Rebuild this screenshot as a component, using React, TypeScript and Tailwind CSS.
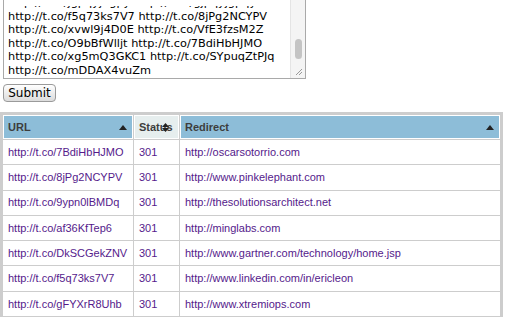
const lines = [
  "http://t.co/f5q73ks7V7 http://t.co/8jPg2NCYPV",
  "http://t.co/xvwl9j4D0E http://t.co/VfE3fzsM2Z",
  "http://t.co/O9bBfWlljt http://t.co/7BdiHbHJMO",
  "http://t.co/xg5mQ3GKC1 http://t.co/SYpuqZtPJq",
  "http://t.co/mDDAX4vuZm",
];

const rows = [
  ["http://t.co/7BdiHbHJMO", "http://oscarsotorrio.com"],
  ["http://t.co/8jPg2NCYPV", "http://www.pinkelephant.com"],
  ["http://t.co/9ypn0lBMDq", "http://thesolutionsarchitect.net"],
  ["http://t.co/af36KfTep6", "http://minglabs.com"],
  ["http://t.co/DkSCGekZNV", "http://www.gartner.com/technology/home.jsp"],
  ["http://t.co/f5q73ks7V7", "http://www.linkedin.com/in/ericleon"],
  ["http://t.co/gFYXrR8Uhb", "http://www.xtremiops.com"],
  ["", ""],
];

function UpArrow() {
  return (
    <svg width="8" height="5" viewBox="0 0 8 5" className="shrink-0">
      <path d="M0 5 L4 0 L8 5 Z" fill="#222" />
    </svg>
  );
}

function BothArrows() {
  return (
    <svg width="7" height="9" viewBox="0 0 7 9" className="absolute left-[27px] top-[7px]">
      <path d="M0 4 L3.5 0 L7 4 Z" fill="#222" />
      <path d="M0 5 L3.5 9 L7 5 Z" fill="#222" />
    </svg>
  );
}

export default function App() {
  return (
    <div className="w-[507px] h-[317px] overflow-hidden bg-white">
      {/* textarea, scrolled down */}
      <div className="ml-[3px] w-[303px] h-[79px] border-x border-b border-[#a9a9a9] relative overflow-hidden flex">
        <div className="flex-1 flex flex-col justify-end pl-[4px] pb-[1px] font-['DejaVu_Sans',sans-serif] text-[11.3px] leading-[13.5px] text-black">
          <div className="h-[4px] overflow-hidden flex flex-col justify-end">
            <div className="whitespace-nowrap">http://t.co/jgpqyj4gpy http://t.co/gjpqyjgpqy</div>
          </div>
          {lines.map((l, i) => (
            <div key={i} className="whitespace-nowrap">{l}</div>
          ))}
        </div>
        <div className="w-[15px] bg-[#f4f4f4] border-l border-[#e4e4e4] flex flex-col items-center pt-[39px]">
          <div className="w-[7px] h-[20px] rounded-full bg-[#c4c4c4]" />
        </div>
        <svg width="8" height="8" viewBox="0 0 8 8" className="absolute right-[2px] bottom-[2px]">
          <path d="M7 1 L1 7 M7 4 L4 7" stroke="#999" strokeWidth="1" />
        </svg>
      </div>

      <button className="ml-[3px] mt-[5px] h-[18px] w-[53px] rounded-[4px] border border-[#9a9a9a] bg-gradient-to-b from-white to-[#dcdcdc] font-['DejaVu_Sans',sans-serif] text-[12px] leading-[16px] text-black">
        Submit
      </button>

      <table className="mt-[9px] w-[503px] border-separate border-spacing-[1px] border-2 border-[#cdcdcd] bg-[#cdcdcd] font-['Liberation_Sans',Arial,sans-serif] text-[11px] text-left table-fixed">
        <thead>
          <tr className="h-[24px]">
            <th className="w-[130px] bg-[#8dbdd8] border border-white px-[4px] font-bold text-[#3d3d3d]">
              <div className="flex items-center justify-between pr-[1px]">
                <span>URL</span>
                <UpArrow />
              </div>
            </th>
            <th className="w-[45px] bg-[#e6eeee] border border-white px-[4px] font-bold text-[#3d3d3d] relative">
              <span>Status</span>
              <BothArrows />
            </th>
            <th className="bg-[#8dbdd8] border border-white px-[4px] font-bold text-[#3d3d3d]">
              <div className="flex items-center justify-between pr-[1px]">
                <span>Redirect</span>
                <UpArrow />
              </div>
            </th>
          </tr>
        </thead>
        <tbody>
          {rows.map(([u, r], i) => (
            <tr key={i} className="h-[24.3px]">
              <td className="bg-white px-[5px] text-[#551a8b] whitespace-nowrap overflow-hidden">{u}</td>
              <td className="bg-white px-[5px] text-[#551a8b]">{u ? "301" : ""}</td>
              <td className="bg-white px-[5px] text-[#551a8b] whitespace-nowrap">{r}</td>
            </tr>
          ))}
        </tbody>
      </table>
    </div>
  );
}
